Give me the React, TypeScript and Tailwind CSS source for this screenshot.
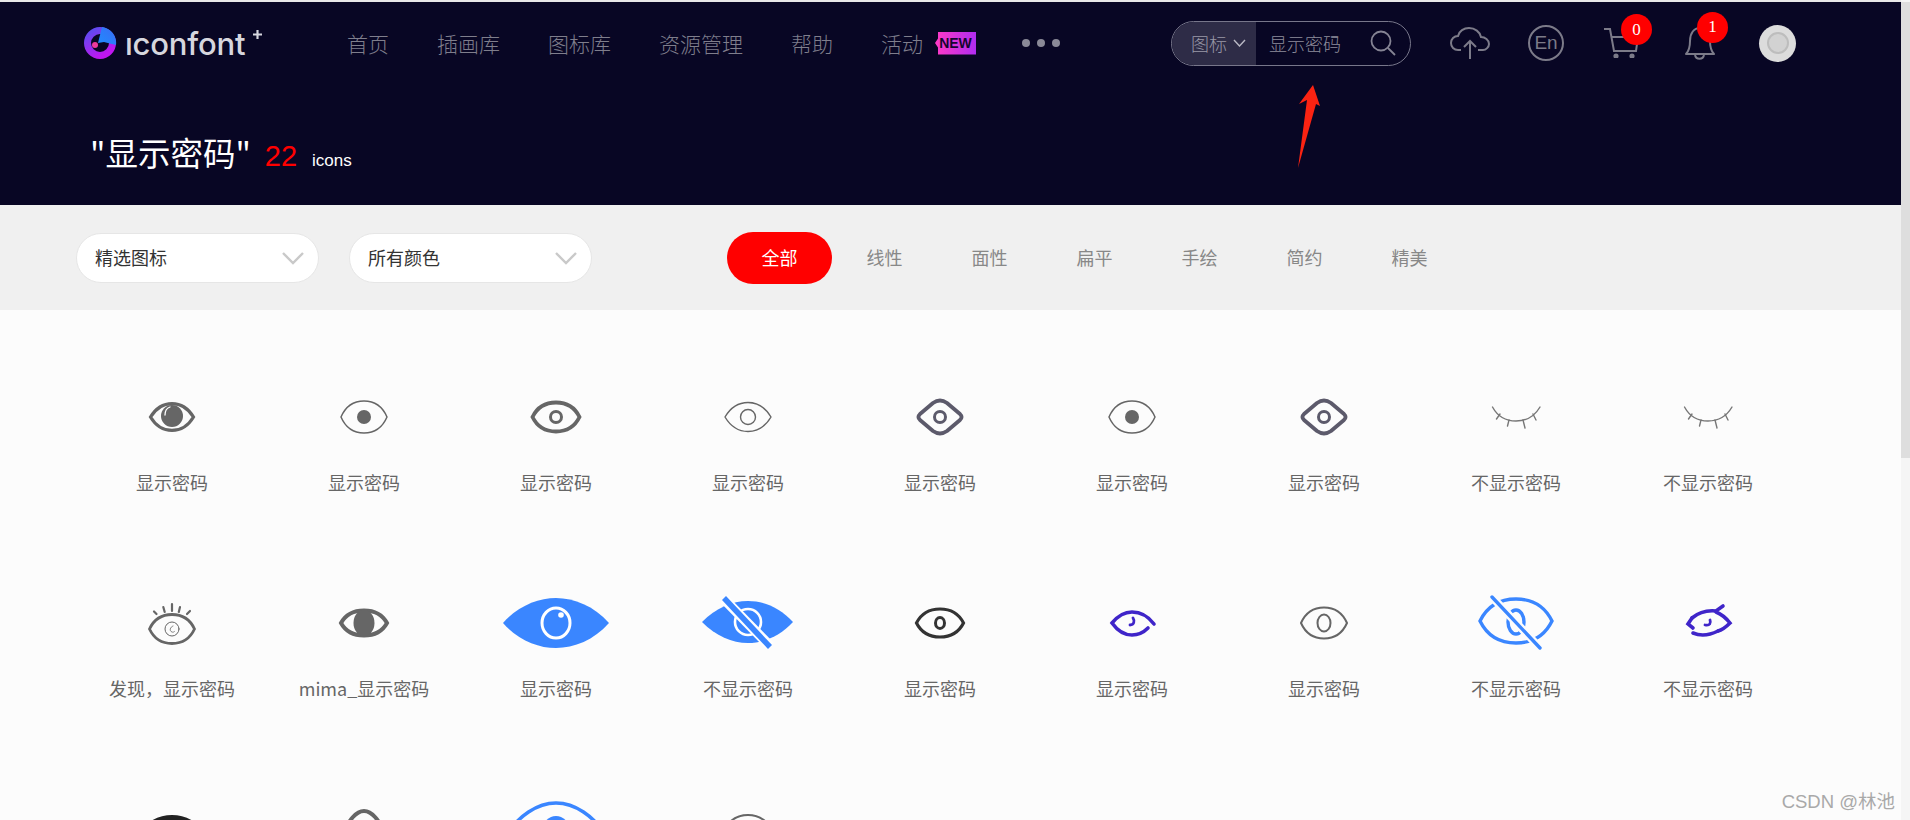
import React from "react";

const FONT = "font-['Noto_Sans_CJK_SC','Noto_Sans',sans-serif]";

const almond = (w: number, h: number, dy = 0) => {
  const k = h * 1.33;
  return `M${-w} ${dy}C${-w * 0.5} ${dy - k} ${w * 0.5} ${dy - k} ${w} ${dy}C${w * 0.5} ${dy + k} ${-w * 0.5} ${dy + k} ${-w} ${dy}Z`;
};
const round = (w: number, h: number, dy = 0) =>
  `M${-w} ${dy}C${-w * 0.82} ${dy - h * 0.6} ${-w * 0.5} ${dy - h} 0 ${dy - h}C${w * 0.5} ${dy - h} ${w * 0.82} ${dy - h * 0.6} ${w} ${dy}C${w * 0.82} ${dy + h * 0.6} ${w * 0.5} ${dy + h} 0 ${dy + h}C${-w * 0.5} ${dy + h} ${-w * 0.82} ${dy + h * 0.6} ${-w} ${dy}Z`;

const G = "#666666";
const BLUE = "#3a86ff";
const PUR = "#3f25c9";

const Closed = () => (
  <g fill="none" stroke="#777" strokeWidth={1.4} strokeLinecap="round">
    <path d="M-23.5 -10C-17 2 -8 4 0 4C8 4 17 2 24 -10" />
    <path d="M-16 -3L-19.5 2M-7 3L-8.5 9M7 3L9 11M17 -3L20 3" />
  </g>
);
const Diamond = () => (
  <g fill="none" stroke="#5c5a6b">
    <path d="M-20 -3L-7 -14Q0 -19 7 -14L20 -3Q23 0 20 3L7 14Q0 19 -7 14L-20 3Q-23 0 -20 -3Z" strokeWidth={3.8} strokeLinejoin="round" />
    <circle r={5.5} strokeWidth={3} />
  </g>
);
const Thin = ({ pupil }: { pupil: string }) => (
  <g>
    <path d={round(23, 16)} fill="none" stroke={G} strokeWidth={1.5} />
    <ellipse rx={7} ry={7} fill={pupil} />
  </g>
);

const ICONS: React.ReactNode[] = [
  <g>
    <path d={almond(21.5, 13.5)} fill="none" stroke={G} strokeWidth={3.2} />
    <circle r={11} cy={-1} fill={G} />
    <path d="M-7 -2C-7 -6 -5 -9 -2 -10" fill="none" stroke="#fff" strokeWidth={1.3} strokeLinecap="round" />
  </g>,
  <Thin pupil={G} />,
  <g fill="none" stroke={G}>
    <path d={round(23.5, 14.5)} strokeWidth={3.8} />
    <circle r={5.5} strokeWidth={3} />
  </g>,
  <g fill="none" stroke={G} strokeWidth={1.4}>
    <path d={almond(23, 14.5)} />
    <circle r={7.5} />
  </g>,
  <Diamond />,
  <Thin pupil={G} />,
  <Diamond />,
  <Closed />,
  <Closed />,
  <g fill="none" stroke={G} strokeLinecap="round">
    <path d={round(22.5, 14.5, 6)} strokeWidth={2.8} />
    <circle cy={6} r={7} strokeWidth={1} />
    <path d="M1 3C-2 4 -3 8 0 9C1 9.5 2 9 2.5 8.5" strokeWidth={0.8} />
    <path d="M-18 -11.5L-15.5 -9M-8.7 -16L-7.3 -11M0 -19L0 -12M8 -16L6.8 -11M18 -12L15 -9" strokeWidth={2.2} />
  </g>,
  <g>
    <path d={round(23, 12.5)} fill="none" stroke={G} strokeWidth={4} />
    <ellipse rx={10.5} ry={13} fill={G} />
  </g>,
  <g>
    <path d="M-53 0C-38 -17 -18 -25 0 -25C18 -25 38 -17 53 0C38 17 18 25 0 25C-18 25 -38 17 -53 0Z" fill={BLUE} />
    <ellipse rx={14} ry={15} fill="none" stroke="#fff" strokeWidth={3} />
    <circle cx={5} cy={-8} r={2.8} fill="#fff" />
  </g>,
  <g>
    <path d="M-46 -1C-32 -15 -16 -22 0 -22C16 -22 32 -15 45 -1C32 13 16 20 0 20C-16 20 -32 13 -46 -1Z" fill={BLUE} />
    <circle r={13} cy={-1} fill="none" stroke="#fff" strokeWidth={2.6} />
    <path d="M-24 -24L22 23" stroke="#fff" strokeWidth={10} />
    <path d="M-24 -25L22 24" stroke={BLUE} strokeWidth={5.5} />
  </g>,
  <g fill="none" stroke="#333">
    <path d={round(23.5, 14)} strokeWidth={3.2} />
    <ellipse rx={4.5} ry={5.5} strokeWidth={3} />
  </g>,
  <g fill="none" stroke={PUR} strokeWidth={3.6} strokeLinecap="round">
    <path d="M22 1C16 -7 8 -11 0 -11C-8 -11 -15 -6 -20 0C-15 7 -8 12 0 12C6 12 12 9 16 5" />
    <path d="M1 -5C3 -2 2 2 -2 2" strokeWidth={2.8} />
  </g>,
  <g fill="none" stroke={G} strokeWidth={2}>
    <path d={round(23, 15.5)} />
    <ellipse rx={6.5} ry={8.5} />
  </g>,
  <g fill="none" stroke={BLUE} strokeWidth={3.4} strokeLinecap="round">
    <path d={round(36, 22, -2)} />
    <ellipse rx={8} ry={12} cy={-1} />
    <path d="M-24 -26L24 25" stroke="#fcfcfc" strokeWidth={8} />
    <path d="M-24 -26L24 25" />
  </g>,
  <g fill="none" stroke={PUR} strokeWidth={3.6} strokeLinecap="round">
    <path d="M-16 -5C-10 -10 -2 -13 8 -12L15 -17" />
    <path d="M8 -11C13 -9 18 -5 22 0C18 4 14 7 10 8" />
    <path d="M-16 -5L-20 1L-15 5" />
    <path d="M-15 10C-8 13 0 13 10 8" />
    <path d="M2 -3C3 0 2 3 -3 2" strokeWidth={2.8} />
  </g>,
  <path d={almond(30, 14)} fill="#222" />,
  <path d="M-24 8C-14 -10 -8 -18 0 -18C8 -18 14 -10 24 8" fill="none" stroke={G} strokeWidth={4} />,
  <g>
    <path d="M-52 10C-38 -14 -18 -26 0 -26C18 -26 38 -14 52 10" fill="none" stroke={BLUE} strokeWidth={3.6} />
    <circle r={13} fill={BLUE} />
  </g>,
  <path d={almond(24, 14)} fill="none" stroke={G} strokeWidth={2} />,
];

const LABELS = [
  "显示密码", "显示密码", "显示密码", "显示密码", "显示密码", "显示密码", "显示密码", "不显示密码", "不显示密码",
  "发现，显示密码", "mima_显示密码", "显示密码", "不显示密码", "显示密码", "显示密码", "显示密码", "不显示密码", "不显示密码",
];

const TABS = ["全部", "线性", "面性", "扁平", "手绘", "简约", "精美"];
const NAV = ["首页", "插画库", "图标库", "资源管理", "帮助", "活动"];

const Logo = () => (
  <svg width="34" height="34" viewBox="-17 -17 34 34" className="shrink-0">
    <defs>
      <linearGradient id="lg" x1="0" y1="0" x2="0.6" y2="1">
        <stop offset="0" stopColor="#5a4df0" />
        <stop offset="1" stopColor="#c016f0" />
      </linearGradient>
      <linearGradient id="wd" x1="0" y1="1" x2="1" y2="0">
        <stop offset="0" stopColor="#1f8cff" />
        <stop offset="1" stopColor="#3a6cf5" />
      </linearGradient>
    </defs>
    <circle r={12.5} fill="none" stroke="url(#lg)" strokeWidth={7} />
    <path d="M-2 0L2 -16A16 16 0 0 1 16 2L4 -1Z" fill="url(#wd)" />
    <circle cx={-5} cy={2} r={3} fill="#ee3a9c" />
  </svg>
);

const Chevron = () => (
  <svg width="24" height="14" viewBox="0 0 24 14" fill="none" stroke="#c9c9c9" strokeWidth={2.4}>
    <path d="M2 2L12 12L22 2" />
  </svg>
);

const Select = ({ label }: { label: string }) => (
  <div className="flex h-[50px] w-[243px] items-center justify-between rounded-[25px] border border-[#e6e6e6] bg-white pl-[18px] pr-[13px]">
    <span className="text-[18px] text-[#333]">{label}</span>
    <Chevron />
  </div>
);

const Badge = ({ n }: { n: number }) => (
  <span className="absolute right-[-13px] top-[-14px] flex h-[31px] w-[31px] items-center justify-center rounded-full bg-[#ff0000] font-['Liberation_Serif',serif] text-[17px] text-white">
    {n}
  </span>
);

export default function App() {
  return (
    <div className={`relative flex h-[820px] w-full overflow-hidden bg-[#fcfcfc] ${FONT}`}>
      <div className="flex min-w-0 flex-1 flex-col">
        <div className="h-[2px] shrink-0 bg-[#e8e8e8]" />
        <header className="relative h-[203px] shrink-0 bg-[#080624]">
          <div className="flex h-[82px] items-center pl-[83px]">
            <div className="flex w-[264px] items-center">
              <Logo />
              <span className="relative ml-[8px] font-['Inter',sans-serif] text-[31px] font-medium leading-none tracking-[-0.2px] text-[#d6d6de]">
                ıconfont
                <svg width="9" height="9" viewBox="0 0 10 10" className="absolute right-[-17px] top-[2px]" fill="#d6d6de">
                  <path d="M3.8 0H6.2V3.8H10V6.2H6.2V10H3.8V6.2H0V3.8H3.8Z" />
                </svg>
              </span>
            </div>
            <nav className="flex items-center gap-12 text-[21px] font-light leading-none text-[#7f7e8c]">
              {NAV.map((n) => (
                <span key={n}>{n}</span>
              ))}
            </nav>
            <span className="ml-[12px] flex h-[23px] w-[41px] items-center justify-center bg-[linear-gradient(90deg,#ff3ac6,#b02cf0)] font-['Liberation_Sans',sans-serif] text-[14px] font-bold text-[#150530] [clip-path:polygon(0_50%,3px_30%,3px_0,100%_0,100%_100%,3px_100%,3px_70%)]">
              NEW
            </span>
            <div className="ml-[46px] flex gap-[7px]">
              <i className="h-[8px] w-[8px] rounded-full bg-[#8a8997]" />
              <i className="h-[8px] w-[8px] rounded-full bg-[#8a8997]" />
              <i className="h-[8px] w-[8px] rounded-full bg-[#8a8997]" />
            </div>
            <div className="ml-[111px] flex h-[45px] w-[240px] items-center overflow-hidden rounded-[22.5px] border border-[#77768a]">
              <div className="flex h-full w-[84px] items-center gap-[6px] bg-[#2e2c47] pl-[19px] text-[18px] font-light text-[#9a99a8]">
                <span>图标</span>
                <svg width="13" height="8" viewBox="0 0 13 8" fill="none" stroke="#b9b8c4" strokeWidth={1.4}>
                  <path d="M1 1L6.5 7L12 1" />
                </svg>
              </div>
              <span className="ml-[13px] text-[18px] font-light text-[#8d8c9b]">显示密码</span>
              <svg width="26" height="26" viewBox="0 0 26 26" className="ml-[29px]" fill="none" stroke="#858494" strokeWidth={1.8}>
                <circle cx="11" cy="11" r="9.5" />
                <path d="M18 18L25 25" />
              </svg>
            </div>
            <div className="ml-[39px] flex items-center">
              <svg width="40" height="32" viewBox="0 0 40 32" fill="none" stroke="#7c7b89" strokeWidth={2}>
                <path d="M11 23H8C4 23 1 20 1 16C1 12 4 9 8 9C9 4 14 1 19 1C25 1 30 5 31 10C35 10 39 13 39 17C39 20 36 23 33 23H28" />
                <path d="M20 32V14M14 20L20 14L26 20" />
              </svg>
              <div className="ml-[38px] flex h-[36px] w-[36px] items-center justify-center rounded-full border-2 border-[#7c7b89] font-['Liberation_Sans',sans-serif] text-[19px] text-[#7c7b89]">
                En
              </div>
              <div className="relative ml-[39px] h-[30px] w-[36px]">
                <svg width="36" height="30" viewBox="0 0 36 30" fill="none" stroke="#7c7b89" strokeWidth={2}>
                  <path d="M1 1H7L11 23H33L35 9H8" />
                  <circle cx="13" cy="28" r="1.6" fill="#7c7b89" />
                  <circle cx="29" cy="28" r="1.6" fill="#7c7b89" />
                </svg>
                <Badge n={0} />
              </div>
              <div className="relative ml-[45px] h-[35px] w-[31px]">
                <svg width="31" height="35" viewBox="0 0 31 35" fill="none" stroke="#7c7b89" strokeWidth={2}>
                  <path d="M2 28C5 25 6 22 6 15C6 7 10 2 16 2C22 2 26 7 26 15C26 22 27 25 30 28Z" strokeLinejoin="round" />
                  <path d="M11 29C12 34 19 34 20 29" />
                </svg>
                <Badge n={1} />
              </div>
              <div className="relative ml-[44px] flex h-[37px] w-[37px] items-center justify-center overflow-hidden rounded-full bg-[#dcdcdc]">
                <div className="h-[22px] w-[22px] rounded-full border-2 border-[#bdbdbd] bg-[#d2d2d2]" />
              </div>
            </div>
          </div>
          <div className="mt-[48px] flex items-baseline pl-[90px]">
            <span className="text-[32.5px] leading-[40px] text-white">"显示密码"</span>
            <span className="ml-[14px] font-['Liberation_Sans',sans-serif] text-[29px] leading-[40px] text-[#ff0000]">22</span>
            <span className="ml-[15px] font-['Liberation_Sans',sans-serif] text-[17px] text-white">icons</span>
          </div>
        </header>
        <div className="flex h-[105px] shrink-0 items-center bg-[#f0f0f0] pl-[76px]">
          <div className="flex gap-[30px]">
            <Select label="精选图标" />
            <Select label="所有颜色" />
          </div>
          <div className="ml-[135px] flex items-center text-[18px] font-normal text-[#888]">
            {TABS.map((t, i) => (
              <span
                key={t}
                className={
                  i === 0
                    ? "flex h-[52px] w-[105px] items-center justify-center rounded-[26px] bg-[#ff0000] text-white"
                    : "flex h-[52px] w-[105px] items-center justify-center"
                }
              >
                {t}
              </span>
            ))}
          </div>
        </div>
        <div className="grid grid-cols-[repeat(9,192px)] auto-rows-[206px] pl-[76px] pt-[79px]">
          {ICONS.map((icon, i) => (
            <div key={i} className="flex flex-col items-center">
              <svg width="120" height="56" viewBox="-60 -28 120 56" className="overflow-visible">
                {icon}
              </svg>
              {LABELS[i] && (
                <span className="mt-[25px] text-[18px] font-normal leading-[24px] text-[#666]">{LABELS[i]}</span>
              )}
            </div>
          ))}
        </div>
      </div>
      <div className="z-10 w-[9px] shrink-0 bg-[#f5f5f5] pt-[2px]">
        <div className="h-[456px] bg-[#dedede]" />
      </div>
      <svg width="24" height="86" viewBox="0 0 24 86" className="absolute left-[1296px] top-[84px]">
        <path d="M17 1L24 22L20 20L2 84L11 16L3 20Z" fill="#fb2312" />
      </svg>
      <span className="absolute right-[15px] top-[788px] font-['Liberation_Sans','Noto_Sans_CJK_SC',sans-serif] text-[18.5px] text-[#a9a9a9]">
        CSDN @林池
      </span>
    </div>
  );
}
